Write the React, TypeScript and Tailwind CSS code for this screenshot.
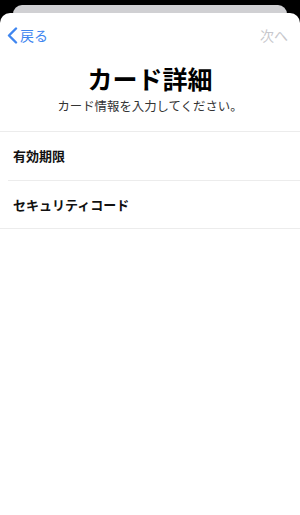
export default function App() {
  return (
    <div
      className="flex h-[515px] w-[300px] flex-col overflow-hidden bg-black"
      style={{ fontFamily: '"Noto Sans CJK JP", "Noto Sans", sans-serif' }}
    >
      <div className="mx-[13px] mt-[5px] h-[10px] shrink-0 rounded-t-[9px] bg-[#d0d0d3]" />
      <div className="-mt-[2px] flex flex-1 flex-col rounded-t-[10px] bg-white">
        <div className="flex h-[40px] items-center justify-between px-[7px] pt-[4px]">
          <button className="flex items-center gap-[2px] text-[14px] text-[#3f86f0]">
            <svg width="11" height="17" viewBox="0 0 11 17" fill="none">
              <path d="M9 1.5L2 8.5L9 15.5" stroke="#3f86f0" strokeWidth="2.4" strokeLinecap="round" strokeLinejoin="round" />
            </svg>
            <span>戻る</span>
          </button>
          <span className="pr-[5px] text-[14px] text-[#c7c7cc]">次へ</span>
        </div>
        <div className="flex flex-col items-center pt-[8px]">
          <h1 className="text-[25px] font-bold leading-[34px] text-black">カード詳細</h1>
          <p className="mt-[2px] text-[12.4px] leading-[18px] text-[#333]">カード情報を入力してください。</p>
        </div>
        <div className="mt-[16px] border-t border-[#ececec]">
          <div className="flex h-[48px] items-center px-[13px] text-[13px] font-bold text-[#111]">有効期限</div>
          <div className="ml-[8px] border-t border-[#ececec]" />
          <div className="flex h-[47px] items-center px-[13px] text-[13px] font-bold text-[#111]">セキュリティコード</div>
          <div className="border-t border-[#ececec]" />
        </div>
      </div>
    </div>
  );
}
